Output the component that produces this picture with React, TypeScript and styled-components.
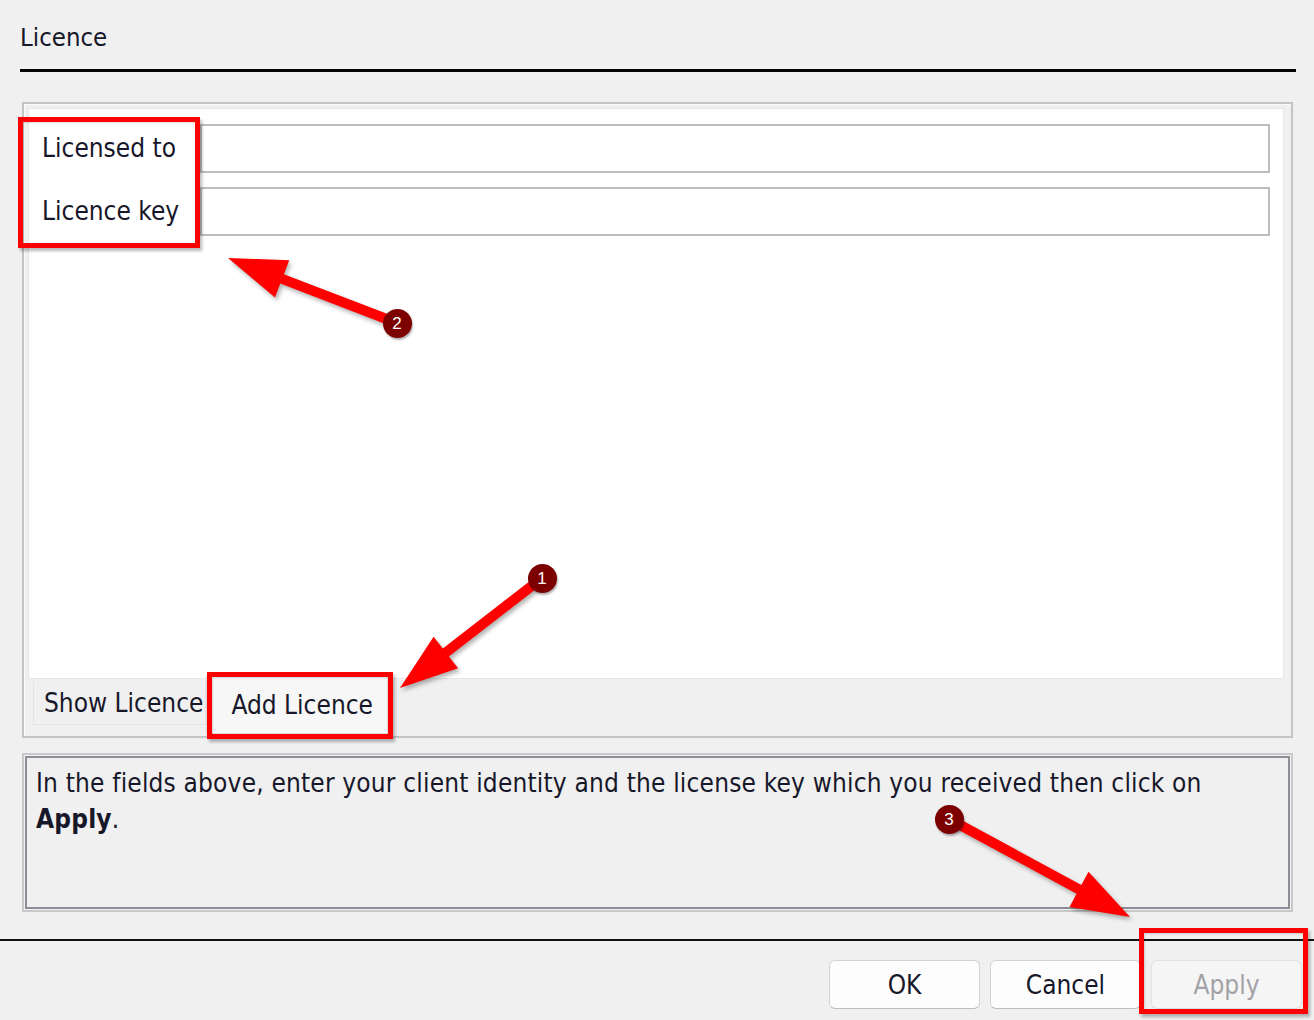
import React from 'react'
import styled, { createGlobalStyle } from 'styled-components'

const GlobalStyle = createGlobalStyle`
  html, body {
    margin: 0;
    padding: 0;
    background: #f0f0f0;
  }
  body {
    font-family: 'DejaVu Sans Condensed', 'DejaVu Sans', sans-serif;
    font-stretch: condensed;
    color: #17172a;
  }
`

const Page = styled.div`
  position: relative;
  width: 1314px;
  height: 1020px;
  overflow: hidden;
  display: flex;
  flex-direction: column;
  background: #f0f0f0;
`

const Header = styled.header`
  padding: 19px 18px 0 20px;
`

const Title = styled.h1`
  margin: 0;
  font-size: 25.5px;
  font-weight: 400;
  line-height: 36px;
`

const TitleRule = styled.div`
  margin-top: 14px;
  height: 3px;
  background: #050505;
`

const Body = styled.div`
  padding: 30px 21px 0 22px;
  display: flex;
  flex-direction: column;
`

const Panel = styled.section`
  height: 636px;
  box-sizing: border-box;
  border: 2px solid #c4c4c4;
  box-shadow: inset 1px 1px 0 #fbfbfb;
  padding: 4px 7px 0 4px;
  display: flex;
  flex-direction: column;
`

const Sheet = styled.div`
  height: 571px;
  box-sizing: border-box;
  background: #fff;
  border: 1px solid #e6e6e6;
  padding: 15px 13px 0 13px;
  display: flex;
  flex-direction: column;
  gap: 14px;
`

const FieldRow = styled.div`
  display: grid;
  grid-template-columns: 158px 1fr;
  align-items: center;
  height: 49px;
`

const FieldLabel = styled.label`
  font-size: 26px;
  line-height: 49px;
  white-space: nowrap;
`

const Field = styled.input`
  height: 49px;
  box-sizing: border-box;
  border: 2px solid #bdbdc1;
  background: #fff;
  outline: none;
  padding: 0 8px;
  font: inherit;
`

const TabStrip = styled.div`
  flex: 1;
  display: flex;
  align-items: flex-start;
  padding-left: 5px;
`

const Tab = styled.div<{ $active?: boolean }>`
  box-sizing: border-box;
  font-size: 26px;
  white-space: nowrap;
  display: flex;
  align-items: center;
  margin-top: ${p => (p.$active ? '-3px' : '2px')};
  height: ${p => (p.$active ? '58px' : '44px')};
  padding: ${p => (p.$active ? '0 14px 0 24px' : '0 2px 0 10px')};
  background: ${p => (p.$active ? '#f7f7f7' : '#f0f0f0')};
  border: 1px solid ${p => (p.$active ? '#dcdcdc' : '#e3e3e3')};
  border-top: ${p => (p.$active ? '1px solid #dcdcdc' : 'none')};
`

const Description = styled.div`
  margin-top: 15px;
  height: 159px;
  box-sizing: border-box;
  border: 2px solid #c8c8c8;
  box-shadow: inset 0 0 0 1px #f2f2f2, inset 0 0 0 3px #8d8d95;
  padding: 10px 12px 0 12px;
  font-size: 26px;
  line-height: 36px;
  letter-spacing: 0.18px;
`

const Footer = styled.footer`
  margin-top: 27px;
  border-top: 2px solid #111;
  padding: 19px 12px 0 0;
  display: flex;
  justify-content: flex-end;
  gap: 10px;
`

const Button = styled.button<{ $disabled?: boolean }>`
  width: 151px;
  height: 49px;
  box-sizing: border-box;
  border: 1px solid ${p => (p.$disabled ? '#e2e2e2' : '#d2d2d2')};
  border-bottom-color: ${p => (p.$disabled ? '#dcdcdc' : '#bdbdbd')};
  border-radius: 6px;
  background: ${p => (p.$disabled ? '#f5f5f5' : '#fdfdfd')};
  color: ${p => (p.$disabled ? '#a2a2a6' : '#17172a')};
  font-family: inherit;
  font-stretch: condensed;
  font-size: 26px;
  padding: 0;
`

// callouts drawn over the dialog
const Overlay = styled.div`
  position: absolute;
  inset: 0;
  pointer-events: none;
`

const ArrowLayer = styled.svg`
  position: absolute;
  left: 0;
  top: 0;
  filter: drop-shadow(2px 3px 2px rgba(0, 0, 0, 0.3));
`

const RedBox = styled.div<{ $x: number; $y: number; $w: number; $h: number }>`
  position: absolute;
  left: ${p => p.$x}px;
  top: ${p => p.$y}px;
  width: ${p => p.$w}px;
  height: ${p => p.$h}px;
  box-sizing: border-box;
  border: 5px solid #ff0000;
  box-shadow: 2px 3px 3px rgba(0, 0, 0, 0.28), inset 1px 1px 2px rgba(0, 0, 0, 0.15);
`

const Badge = styled.div<{ $x: number; $y: number }>`
  position: absolute;
  left: ${p => p.$x - 14.5}px;
  top: ${p => p.$y - 14.5}px;
  width: 29px;
  height: 29px;
  border-radius: 50%;
  background: #7c0000;
  color: #fff;
  font-family: 'Liberation Sans', Arial, sans-serif;
  font-size: 17px;
  line-height: 29px;
  text-align: center;
  box-shadow: 1px 2px 2px rgba(0, 0, 0, 0.3);
`

type Pt = [number, number]

function arrowPoints(tail: Pt, tip: Pt, shaft = 5, headLen = 58, headHalf = 20) {
  const dx = tip[0] - tail[0]
  const dy = tip[1] - tail[1]
  const len = Math.hypot(dx, dy)
  const ux = dx / len
  const uy = dy / len
  const nx = -uy
  const ny = ux
  const bx = tip[0] - ux * headLen
  const by = tip[1] - uy * headLen
  const pts: Pt[] = [
    [tail[0] + nx * shaft, tail[1] + ny * shaft],
    [bx + nx * shaft, by + ny * shaft],
    [bx + nx * headHalf, by + ny * headHalf],
    tip,
    [bx - nx * headHalf, by - ny * headHalf],
    [bx - nx * shaft, by - ny * shaft],
    [tail[0] - nx * shaft, tail[1] - ny * shaft],
  ]
  return pts.map(p => `${p[0].toFixed(1)},${p[1].toFixed(1)}`).join(' ')
}

const callouts: { n: number; tail: Pt; tip: Pt }[] = [
  { n: 1, tail: [542, 578], tip: [400, 688] },
  { n: 2, tail: [397, 323], tip: [228, 258] },
  { n: 3, tail: [949, 819], tip: [1130, 917] },
]

export default function App() {
  return (
    <Page>
      <GlobalStyle />
      <Header>
        <Title>Licence</Title>
        <TitleRule />
      </Header>
      <Body>
        <Panel>
          <Sheet>
            <FieldRow>
              <FieldLabel>Licensed to</FieldLabel>
              <Field />
            </FieldRow>
            <FieldRow>
              <FieldLabel>Licence key</FieldLabel>
              <Field />
            </FieldRow>
          </Sheet>
          <TabStrip>
            <Tab>Show Licence</Tab>
            <Tab $active>Add Licence</Tab>
          </TabStrip>
        </Panel>
        <Description>
          In the fields above, enter your client identity and the license key which you received then click on
          <br />
          <b>Apply</b>.
        </Description>
      </Body>
      <Footer>
        <Button>OK</Button>
        <Button>Cancel</Button>
        <Button $disabled disabled>
          Apply
        </Button>
      </Footer>

      <Overlay>
        <RedBox $x={18} $y={117} $w={182} $h={131} />
        <RedBox $x={207} $y={672} $w={186} $h={67} />
        <RedBox $x={1139} $y={928} $w={169} $h={86} />
        <ArrowLayer width={1314} height={1020} viewBox="0 0 1314 1020">
          {callouts.map(c => (
            <polygon key={c.n} points={arrowPoints(c.tail, c.tip)} fill="#ff0000" />
          ))}
        </ArrowLayer>
        {callouts.map(c => (
          <Badge key={c.n} $x={c.tail[0]} $y={c.tail[1]}>
            {c.n}
          </Badge>
        ))}
      </Overlay>
    </Page>
  )
}
